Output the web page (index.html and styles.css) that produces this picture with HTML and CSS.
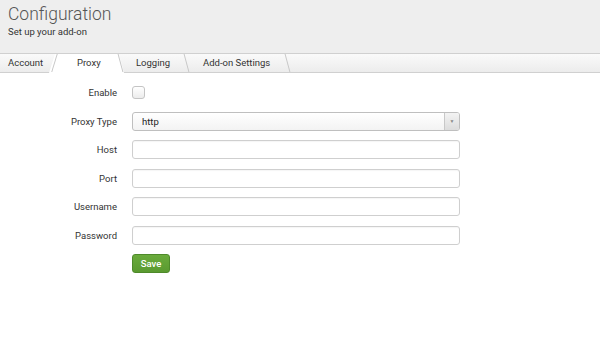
FILE: index.html
```html
<!DOCTYPE html>
<html lang="en">
<head>
  <meta charset="UTF-8" />
  <title>Configuration</title>
  <link rel="stylesheet" href="styles.css">
</head>
<body>
  <div class="header">
    <h1>Configuration</h1>
    <p>Set up your add-on</p>
  </div>

  <div class="tabs">
    <div class="tab tab-account before-active"><span>Account</span></div>
    <div class="tab tab-proxy active"><span>Proxy</span></div>
    <div class="tab tab-logging"><span>Logging</span></div>
    <div class="tab tab-settings"><span>Add-on Settings</span></div>
  </div>

  <form class="form">
    <label>Enable</label>
    <div class="field"><span class="checkbox"></span></div>

    <label>Proxy Type</label>
    <div class="field">
      <div class="select">
        <span class="select-value">http</span>
        <span class="select-arrow">▼</span>
      </div>
    </div>

    <label>Host</label>
    <div class="field"><div class="input"></div></div>

    <label>Port</label>
    <div class="field"><div class="input"></div></div>

    <label>Username</label>
    <div class="field"><div class="input"></div></div>

    <label>Password</label>
    <div class="field"><div class="input"></div></div>

    <span></span>
    <div class="field"><button type="button" class="save">Save</button></div>
  </form>
</body>
</html>
```

FILE: styles.css
```css
body {
  margin: 0;
  font-family: Roboto, "Liberation Sans", sans-serif;
  background: #fff;
  color: #333;
}
.header {
  background: #eeeeee;
  height: 53px;
  padding: 0 8px;
  box-sizing: border-box;
  overflow: hidden;
}
.header h1 {
  margin: 0;
  padding-top: 3px;
  font-size: 17.5px;
  font-weight: 300;
  color: #555;
  line-height: 22px;
}
.header p {
  margin: 1px 0 0;
  font-size: 9.5px;
  color: #333;
}
.tabs {
  display: flex;
  height: 18px;
  border-top: 1px solid #d0d0d0;
  border-bottom: 1px solid #d0d0d0;
  background: linear-gradient(#fafafa, #ececec);
}
.tab {
  position: relative;
  font-size: 9.5px;
  line-height: 18px;
  color: #333;
  box-sizing: border-box;
}
.tab span {
  position: relative;
  z-index: 3;
}
.tab::after {
  content: '';
  position: absolute;
  right: 0;
  top: 0;
  bottom: 0;
  width: 1px;
  background: #c8c8c8;
  transform: skewX(15deg);
  z-index: 2;
}
.tab.before-active::after {
  transform: skewX(-17deg);
}
.tab.active::before {
  content: '';
  position: absolute;
  left: -6px;
  right: -3px;
  top: 0;
  bottom: -1px;
  background: #fff;
  clip-path: polygon(6px 0, calc(100% - 5px) 0, 100% 100%, 0 100%);
  z-index: 1;
}
.tab-account { width: 55px; padding-left: 8px; }
.tab-proxy { width: 66px; padding-left: 22px; }
.tab-logging { width: 66px; padding-left: 15px; }
.tab-settings { width: 101px; padding-left: 16px; }

.form {
  display: grid;
  grid-template-columns: 117px 328px;
  column-gap: 15px;
  row-gap: 9.5px;
  grid-auto-rows: 19px;
  padding-top: 10px;
  margin: 0;
}
.form label {
  font-size: 9.5px;
  color: #333;
  text-align: right;
  line-height: 19px;
}
.field {
  display: flex;
  align-items: center;
}
.checkbox {
  width: 11px;
  height: 11px;
  border: 1px solid #c4c4c4;
  border-radius: 3px;
  background: linear-gradient(#fff, #ececec);
}
.select {
  display: flex;
  width: 100%;
  height: 19px;
  border: 1px solid #bfbfbf;
  border-radius: 3px;
  box-sizing: border-box;
  background: linear-gradient(#fff, #f3f3f3);
  overflow: hidden;
}
.select-value {
  flex: 1;
  font-size: 9.5px;
  line-height: 17px;
  padding-left: 9px;
  color: #222;
}
.select-arrow {
  width: 14px;
  border-left: 1px solid #c8c8c8;
  background: linear-gradient(#f3f3f3, #dcdcdc);
  font-size: 5px;
  color: #888;
  text-align: center;
  line-height: 17px;
}
.input {
  width: 100%;
  height: 19px;
  border: 1px solid #cfcfcf;
  border-radius: 3px;
  box-sizing: border-box;
  box-shadow: inset 0 1px 1px rgba(0,0,0,0.04);
}
.save {
  width: 38px;
  height: 19px;
  padding: 0;
  border: 1px solid #4e8a2a;
  border-radius: 3px;
  background: linear-gradient(#6aab3c, #5a9a30);
  color: #fff;
  font-family: Roboto, "Liberation Sans", sans-serif;
  font-size: 9.5px;
  font-weight: 500;
}
```
